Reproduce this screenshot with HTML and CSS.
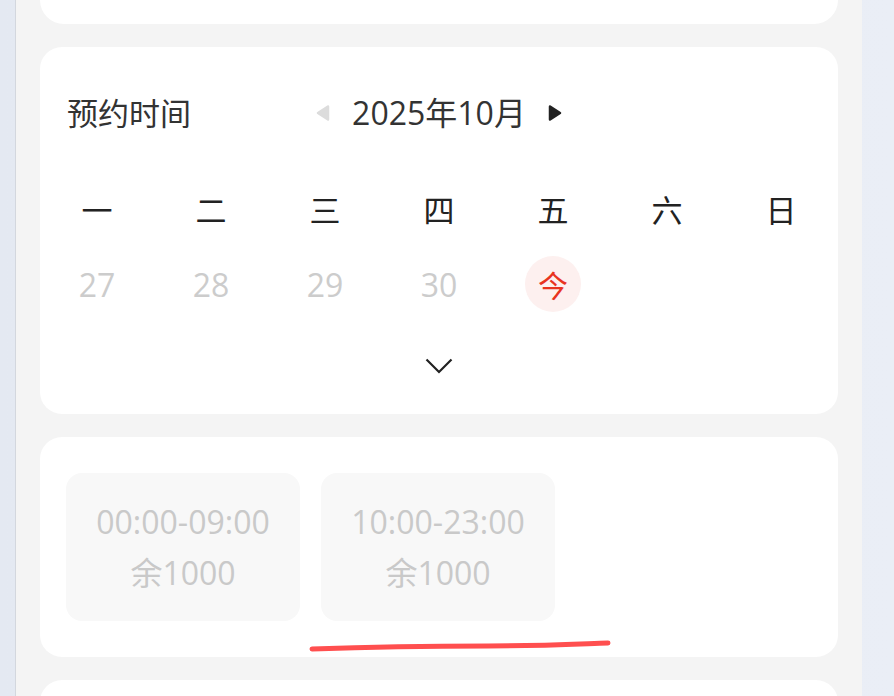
FILE: index.html
```html
<!DOCTYPE html>
<html lang="zh-CN">
<head>
<meta charset="utf-8">
<title>预约时间</title>
<link rel="stylesheet" href="styles.css">
</head>
<body>
<div class="phone">
  <div class="card card-peek"></div>

  <section class="card calendar">
    <div class="cal-head">
      <div class="cal-title">预约时间</div>
      <div class="month-nav">
        <svg class="tri" width="15" height="18" viewBox="0 0 15 18"><path d="M13 2.5 L3 9 L13 15.5 Z" fill="#dcdcdc" stroke="#dcdcdc" stroke-width="2.5" stroke-linejoin="round"/></svg>
        <span class="month">2025年10月</span>
        <svg class="tri" width="15" height="18" viewBox="0 0 15 18"><path d="M2 2.5 L12 9 L2 15.5 Z" fill="#222" stroke="#222" stroke-width="2.5" stroke-linejoin="round"/></svg>
      </div>
    </div>
    <div class="week">
      <div class="wd">一</div><div class="wd">二</div><div class="wd">三</div><div class="wd">四</div><div class="wd">五</div><div class="wd">六</div><div class="wd">日</div>
      <div class="day past">27</div><div class="day past">28</div><div class="day past">29</div><div class="day past">30</div>
      <div class="day"><span class="today">今</span></div><div class="day"></div><div class="day"></div>
    </div>
    <div class="expand">
      <svg width="28" height="17" viewBox="0 0 28 17"><path d="M1.5 1.5 L14 14 L26.5 1.5" fill="none" stroke="#222" stroke-width="2.2"/></svg>
    </div>
  </section>

  <section class="card slots">
    <div class="slot"><div>00:00-09:00</div><div>余1000</div></div>
    <div class="slot"><div>10:00-23:00</div><div>余1000</div></div>
    <svg class="scribble" width="320" height="20" viewBox="0 0 320 20"><path d="M4 14 C 60 12, 120 11, 180 11 C 230 11, 270 9, 300 8" fill="none" stroke="#ff4f4f" stroke-width="5" stroke-linecap="round"/></svg>
  </section>

  <section class="card card-next"></section>
</div>
</body>
</html>
```

FILE: styles.css
```css
html, body {
  margin: 0;
  padding: 0;
}
body {
  background: linear-gradient(90deg, #e4e9f2, #eaeef6);
  height: 696px;
  overflow: hidden;
  font-family: "Open Sans", "Noto Sans CJK SC", sans-serif;
}
.phone {
  margin-left: 15px;
  width: 798px;
  min-height: 696px;
  background: #f4f4f4;
  border-left: 1px solid #d3d7de;
  padding: 0 24px;
  display: flex;
  flex-direction: column;
  gap: 23px;
}
.card {
  background: #fff;
  border-radius: 22px;
}
.card-peek {
  margin-top: -40px;
  height: 64px;
  border-radius: 24px;
  flex-shrink: 0;
}
.calendar {
  padding-top: 36px;
  padding-bottom: 4px;
}
.cal-head {
  display: grid;
  grid-template-columns: 1fr auto 1fr;
  align-items: center;
  height: 60px;
  margin-bottom: 27px;
}
.cal-title {
  padding-left: 27px;
  font-size: 31px;
  color: #333;
  line-height: 40px;
}
.month-nav {
  display: flex;
  align-items: center;
  gap: 22px;
}
.month {
  font-size: 32px;
  color: #333;
  line-height: 40px;
}
.tri {
  display: block;
}
.week {
  display: grid;
  grid-template-columns: repeat(7, 1fr);
  grid-auto-rows: 76px;
}
.wd, .day {
  display: flex;
  align-items: center;
  justify-content: center;
  font-size: 31px;
}
.wd {
  color: #222;
}
.day.past {
  color: #cccccc;
  font-size: 32px;
}
.today {
  width: 56px;
  height: 56px;
  border-radius: 50%;
  background: #fdf0ef;
  color: #e8341f;
  display: flex;
  align-items: center;
  justify-content: center;
  font-size: 30px;
}
.expand {
  height: 88px;
  display: flex;
  align-items: center;
  justify-content: center;
}
.expand svg {
  display: block;
}
.slots {
  position: relative;
  display: flex;
  gap: 21px;
  padding: 36px 26px;
}
.slot {
  width: 234px;
  height: 148px;
  border-radius: 16px;
  background: #f8f8f8;
  display: flex;
  flex-direction: column;
  align-items: center;
  justify-content: center;
  color: #c9c9c9;
  font-size: 32px;
  line-height: 51px;
}
.scribble {
  position: absolute;
  left: 268px;
  top: 198px;
}
.card-next {
  height: 80px;
  flex-shrink: 0;
}
```
